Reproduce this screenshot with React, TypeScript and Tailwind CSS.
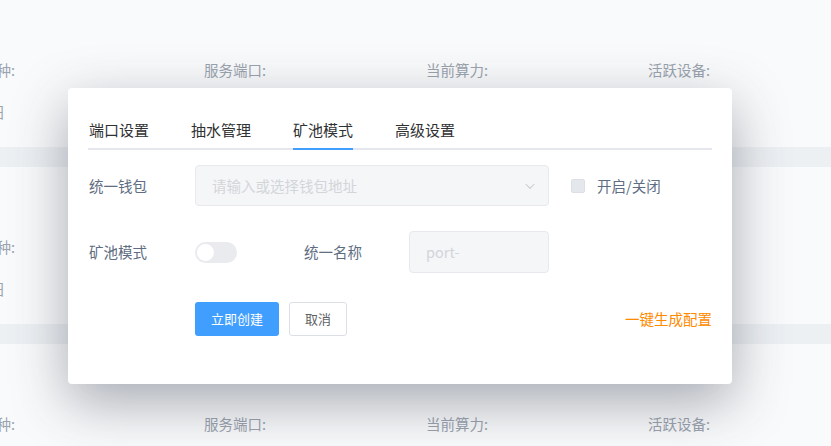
import React from 'react';

const font = { fontFamily: '"Noto Sans CJK SC", "Noto Sans", sans-serif' };

const statLabels = ['币种:', '服务端口:', '当前算力:', '活跃设备:'];

function BackgroundCard({ second }: { second: boolean }) {
  return (
    <div className="h-[157px] shrink-0 bg-[#f9fafb] pt-[70px]">
      <div className="grid w-[888px] grid-cols-4 text-[14.5px] leading-[20px] text-[#9aa3ae]">
        {statLabels.map((label) => (
          <div key={label}>{label}</div>
        ))}
      </div>
      {second && (
        <div className="mt-[22px] -ml-[7px] text-[14.5px] leading-[20px] text-[#9aa3ae]">农田</div>
      )}
    </div>
  );
}

function Tabs() {
  const tabs = ['端口设置', '抽水管理', '矿池模式', '高级设置'];
  return (
    <div className="relative flex h-[40px] gap-[42px] border-b-2 border-[#e4e7ed] pl-px">
      {tabs.map((tab, i) => (
        <div key={tab} className="relative -mb-[2px] flex h-[40px] items-center text-[15px] text-[#303133]">
          {tab}
          {i === 2 && <div className="absolute right-0 bottom-0 left-0 h-[2px] bg-[#409eff]" />}
        </div>
      ))}
    </div>
  );
}

function Chevron() {
  return (
    <svg width="14" height="14" viewBox="0 0 24 24" fill="none" stroke="#c8cbd0" strokeWidth="1.8" strokeLinecap="round" strokeLinejoin="round">
      <path d="M5 9l7 7 7-7" />
    </svg>
  );
}

export default function App() {
  return (
    <div className="relative h-[446px] w-[831px] overflow-hidden bg-[#edf0f3]" style={font}>
      {/* page behind the dialog */}
      <div className="-mt-[10px] -ml-[18px] flex flex-col gap-5">
        <BackgroundCard second />
        <BackgroundCard second />
        <BackgroundCard second={false} />
      </div>

      {/* dialog */}
      <div className="absolute top-[88px] left-[68px] w-[664px] rounded-[4px] bg-white px-5 pt-[22px] pb-[48px] shadow-[0_18px_55px_rgba(40,48,64,0.4)]">
        <Tabs />

        <div className="mt-[15px] flex items-center">
          <div className="w-[107px] pl-px text-[14.5px] text-[#5e6d82]">统一钱包</div>
          <div className="flex h-[41px] w-[354px] items-center justify-between rounded-[4px] border border-[#e7e9ed] bg-[#f5f6f8] pr-[11px] pl-[16px]">
            <span className="text-[14.5px] text-[#d3d5d9]">请输入或选择钱包地址</span>
            <Chevron />
          </div>
          <div className="ml-[22px] flex items-center gap-[12px]">
            <div className="h-[14px] w-[14px] rounded-[2px] border border-[#dcdfe6] bg-[#e4e8ec]" />
            <span className="text-[14.5px] text-[#5e6d82]">开启/关闭</span>
          </div>
        </div>

        <div className="mt-[25px] flex items-center">
          <div className="w-[107px] pl-px text-[14.5px] text-[#5e6d82]">矿池模式</div>
          <div className="w-[109px]">
            <div className="flex h-[21px] w-[42px] items-center rounded-full bg-[#e9ebef] px-[2px]">
              <div className="h-[17px] w-[17px] rounded-full bg-white" />
            </div>
          </div>
          <div className="w-[105px] text-[14.5px] text-[#5e6d82]">统一名称</div>
          <div className="flex h-[42px] w-[140px] items-center rounded-[4px] border border-[#e7e9ed] bg-[#f5f6f8] pl-[16px]">
            <span className="text-[14.5px] text-[#d3d5d9]">port-</span>
          </div>
        </div>

        <div className="mt-[29px] flex items-center">
          <div className="w-[107px]" />
          <button className="h-[34px] w-[84px] rounded-[3px] bg-[#409eff] text-[13px] text-white">立即创建</button>
          <button className="ml-[10px] h-[34px] w-[58px] rounded-[3px] border border-[#dcdfe6] bg-white text-[13px] text-[#606266]">取消</button>
          <div className="ml-auto text-[14.5px] text-[#ff8a00]">一键生成配置</div>
        </div>
      </div>
    </div>
  );
}
